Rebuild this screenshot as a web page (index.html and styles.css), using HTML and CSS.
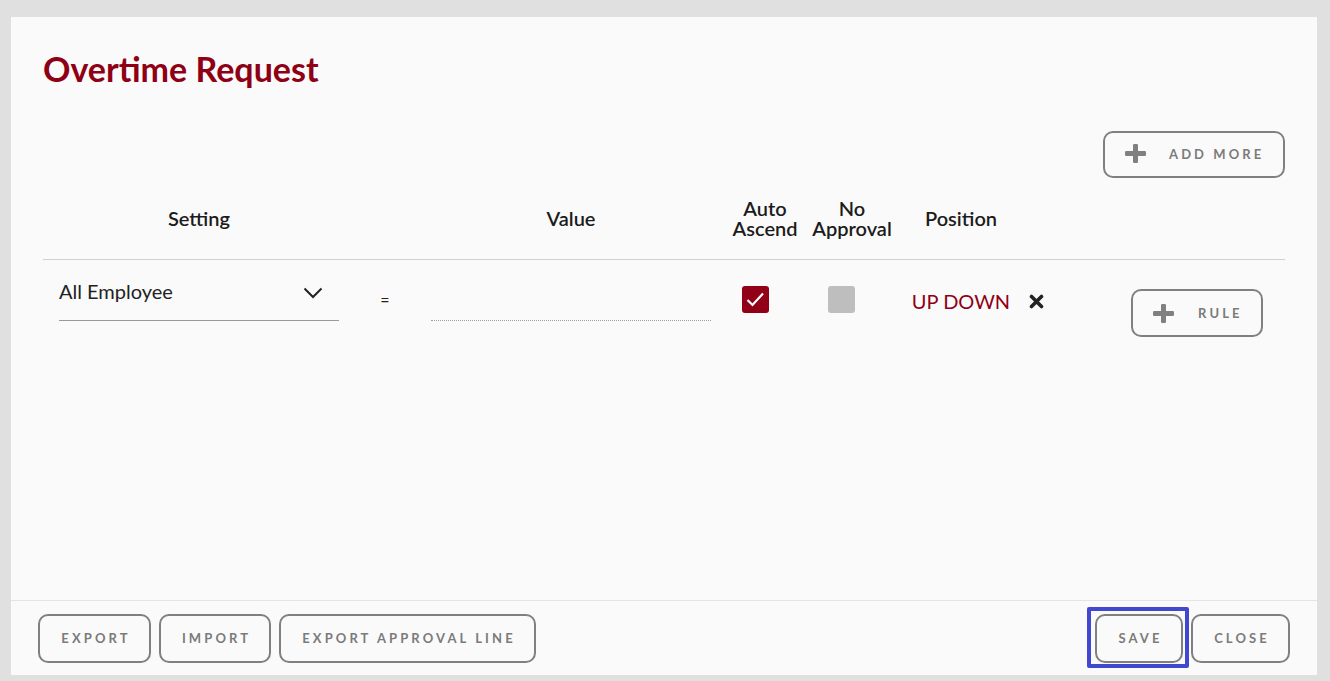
FILE: index.html
```html
<!DOCTYPE html>
<html>
<head>
<meta charset="utf-8">
<link rel="stylesheet" href="styles.css">
</head>
<body>
<div class="panel">
  <div class="content">
    <h1 class="title">Overtime Request</h1>
    <div class="toolbar">
      <button class="btn btn-icon btn-add">
        <svg class="plus" width="21" height="19" viewBox="0 0 21 19"><rect x="8" y="0" width="5" height="19" rx="1.2" fill="#808080"/><rect x="0" y="7" width="21" height="5" rx="1.2" fill="#808080"/></svg>
        <span>ADD MORE</span>
      </button>
    </div>
    <div class="grid head">
      <div class="hcell"><span class="hl">Setting</span></div>
      <div class="hcell"></div>
      <div class="hcell"><span class="hl">Value</span></div>
      <div class="hcell"><span class="hl">Auto</span><span class="hl">Ascend</span></div>
      <div class="hcell"><span class="hl">No</span><span class="hl">Approval</span></div>
      <div class="hcell"><span class="hl">Position</span></div>
      <div class="hcell"></div>
    </div>
    <div class="grid row">
      <div class="cell">
        <div class="select">
          <span>All Employee</span>
          <svg width="20" height="12" viewBox="0 0 20 12"><path d="M1.5 1.5 L10 10 L18.5 1.5" fill="none" stroke="#222" stroke-width="2"/></svg>
        </div>
      </div>
      <div class="cell eq">=</div>
      <div class="cell">
        <div class="value-input"></div>
      </div>
      <div class="cell">
        <div class="check checked">
          <svg width="27" height="27" viewBox="0 0 27 27"><path d="M5.5 14 L10.5 19 L21 7.5" fill="none" stroke="#fff" stroke-width="2.2"/></svg>
        </div>
      </div>
      <div class="cell">
        <div class="check off"></div>
      </div>
      <div class="cell pos">
        <span class="updown">UP DOWN</span>
        <svg class="xicon" width="15" height="15" viewBox="0 0 15 15"><path d="M2.5 2.5 L12.5 12.5 M12.5 2.5 L2.5 12.5" stroke="#222" stroke-width="3.6" stroke-linecap="round"/></svg>
      </div>
      <div class="cell rulecell">
        <button class="btn btn-icon btn-rule">
          <svg class="plus" width="21" height="19" viewBox="0 0 21 19"><rect x="8" y="0" width="5" height="19" rx="1.2" fill="#808080"/><rect x="0" y="7" width="21" height="5" rx="1.2" fill="#808080"/></svg>
          <span>RULE</span>
        </button>
      </div>
    </div>
  </div>
  <div class="footer">
    <div class="group">
      <button class="btn btn-foot w-export">EXPORT</button>
      <button class="btn btn-foot w-import">IMPORT</button>
      <button class="btn btn-foot w-eal">EXPORT APPROVAL LINE</button>
    </div>
    <div class="group">
      <button class="btn btn-foot w-save focused">SAVE</button>
      <button class="btn btn-foot w-close">CLOSE</button>
    </div>
  </div>
</div>
</body>
</html>
```
FILE: styles.css
```css
* { box-sizing: border-box; }
html, body { margin: 0; padding: 0; }
body {
  background: #e0e0e0;
  font-family: Lato, "Noto Sans", sans-serif;
  width: 1330px;
  height: 681px;
  overflow: hidden;
}
.panel {
  margin: 17px 13px 0 11px;
  height: 658px;
  background: #fafafa;
  display: flex;
  flex-direction: column;
}
.content {
  flex: 1;
  padding: 0 32px;
}
.title {
  margin: 0;
  padding-top: 31px;
  font-size: 34px;
  line-height: 41px;
  font-weight: 700;
  color: #8e0014;
}
.toolbar {
  display: flex;
  justify-content: flex-end;
  margin-top: 42px;
}
.btn {
  font-family: Lato, "Noto Sans", sans-serif;
  background: transparent;
  border: 2px solid #808080;
  border-radius: 10px;
  color: #7b7b7b;
  font-weight: 700;
  font-size: 13px;
  letter-spacing: 3.1px;
  cursor: pointer;
  padding: 0;
}
.btn-icon {
  display: flex;
  align-items: center;
}
.btn-add {
  width: 182px;
  height: 47px;
  padding-left: 20px;
  padding-bottom: 2px;
}
.btn-add span { margin-left: 23px; }
.grid {
  display: grid;
  grid-template-columns: 312px 60px 312px 76px 98px 120px 1fr;
}
.head {
  height: 83px;
  border-bottom: 1px solid #d0d0d0;
  margin-top: -1px;
  align-items: center;
}
.hcell {
  display: flex;
  flex-direction: column;
  align-items: center;
  font-size: 20px;
  font-weight: 600;
  color: #1c1c1c;
}
.hl {
  display: block;
  height: 20px;
  line-height: 20px;
  white-space: nowrap;
}
.row {
  align-items: start;
  height: 339px;
}
.cell { display: flex; }
.select {
  margin: 14px 16px 0 16px;
  width: 280px;
  height: 47px;
  border-bottom: 1px solid #9a9a9a;
  display: flex;
  justify-content: space-between;
  align-items: flex-start;
  font-size: 20px;
  line-height: 34px;
  color: #222;
  padding-right: 16px;
}
.select svg { margin-top: 13px; }
.eq {
  justify-content: center;
  font-size: 16px;
  line-height: 20px;
  padding-top: 30px;
  color: #222;
}
.value-input {
  margin: 14px 16px 0 16px;
  width: 280px;
  height: 47px;
  border-bottom: 1px dotted #a0a0a0;
}
.check {
  width: 27px;
  height: 27px;
  border-radius: 3px;
  margin-top: 26px;
}
.checked { background: #910017; margin-left: 15px; }
.off { background: #bebebe; margin-left: 25px; }
.pos {
  position: relative;
  justify-content: center;
  padding-top: 29px;
}
.updown {
  font-size: 20px;
  line-height: 24px;
  color: #8e0014;
}
.xicon {
  position: absolute;
  left: 128px;
  top: 34px;
}
.rulecell {
  padding: 29px 0 0 110px;
}
.btn-rule {
  width: 132px;
  height: 48px;
  padding-left: 20px;
}
.btn-rule span { margin-left: 24px; }
.footer {
  height: 75px;
  border-top: 1px solid #e4e4e4;
  display: flex;
  justify-content: space-between;
  align-items: flex-start;
  padding: 13px 27px 0 27px;
}
.group {
  display: flex;
  gap: 8px;
}
.btn-foot {
  height: 49px;
  text-align: center;
  padding-left: 3px;
  padding-bottom: 1px;
}
.w-export { width: 113px; }
.w-import { width: 112px; }
.w-eal { width: 257px; }
.w-save { width: 88px; }
.w-close { width: 99px; }
.focused { position: relative; }
.focused::after {
  content: "";
  position: absolute;
  left: -10px;
  right: -8px;
  top: -9px;
  bottom: -7px;
  border: 4px solid #4048cf;
  border-radius: 2px;
}
```
